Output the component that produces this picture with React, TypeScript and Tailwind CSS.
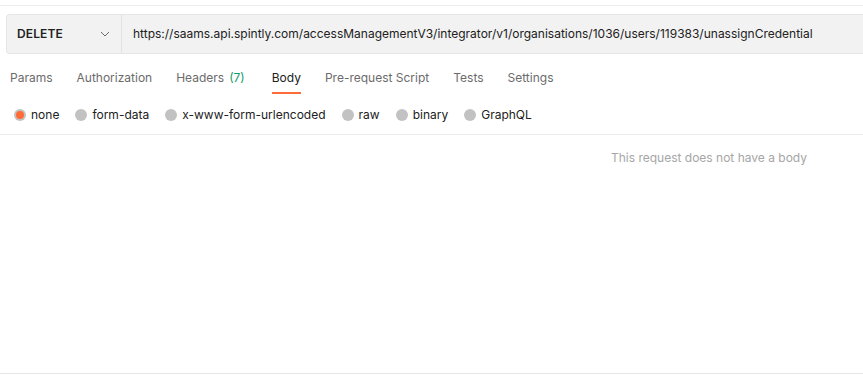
import React from "react";

const tabs = [
  { label: "Params" },
  { label: "Authorization" },
  { label: "Headers", count: "(7)" },
  { label: "Body", active: true },
  { label: "Pre-request Script" },
  { label: "Tests" },
  { label: "Settings" },
];

const radios = [
  { label: "none", checked: true },
  { label: "form-data" },
  { label: "x-www-form-urlencoded" },
  { label: "raw" },
  { label: "binary" },
  { label: "GraphQL" },
];

export default function App() {
  return (
    <div
      className="w-[863px] h-[379px] bg-white overflow-hidden text-[#212121]"
      style={{ fontFamily: "Inter, 'Liberation Sans', sans-serif" }}
    >
      <div className="h-[6px] border-b border-[#ededed]" />
      <div className="pl-[6px] pt-[8px] flex">
        <div className="flex-1 h-[40px] flex bg-[#f2f2f2] border border-r-0 border-[#e6e6e6] rounded-l-[4px] -mr-[4px]">
          <div className="w-[115px] flex items-center justify-between pl-[10px] pr-[11px] border-r border-[#e3e3e3]">
            <span className="text-[12px] font-semibold tracking-[0.1px]">DELETE</span>
            <svg width="10" height="6" viewBox="0 0 10 6" fill="none">
              <path d="M1 1l4 4 4-4" stroke="#6b6b6b" strokeWidth="1" />
            </svg>
          </div>
          <div className="flex items-center pl-[11px] text-[12px] whitespace-nowrap">
            https://saams.api.spintly.com/accessManagementV3/integrator/v1/organisations/1036/users/119383/unassignCredential
          </div>
        </div>
      </div>
      <div className="flex pl-[10px] gap-[24px] h-[40px] mt-[1px]">
        {tabs.map((t) => (
          <div key={t.label} className="relative flex items-center pt-[6px] text-[12px] whitespace-nowrap">
            <span className={t.active ? "text-[#212121]" : "text-[#6b6b6b]"}>
              {t.label}
              {t.count && <span className="text-[#0f9d6b] ml-[5px] mr-[3px]">{t.count}</span>}
            </span>
            {t.active && (
              <div className="absolute left-0 right-0 bottom-[1px] h-[2px] bg-[#ff6c37]" />
            )}
          </div>
        ))}
      </div>
      <div className="flex items-center pl-[14px] gap-[16px] h-[40px] border-b border-[#ededed]">
        {radios.map((r) => (
          <div key={r.label} className="flex items-center gap-[5px] text-[12px] whitespace-nowrap">
            <span className="w-[12px] h-[12px] rounded-full bg-[#c2c2c2] flex items-center justify-center">
              {r.checked && <span className="w-[8px] h-[8px] rounded-full bg-[#ff6c37]" />}
            </span>
            <span>{r.label}</span>
          </div>
        ))}
      </div>
      <div className="h-[239px] border-b border-[#e6e6e6] flex justify-end pr-[56px] pt-[14px]">
        <span className="text-[12px] text-[#a6a6a6]">This request does not have a body</span>
      </div>
    </div>
  );
}
